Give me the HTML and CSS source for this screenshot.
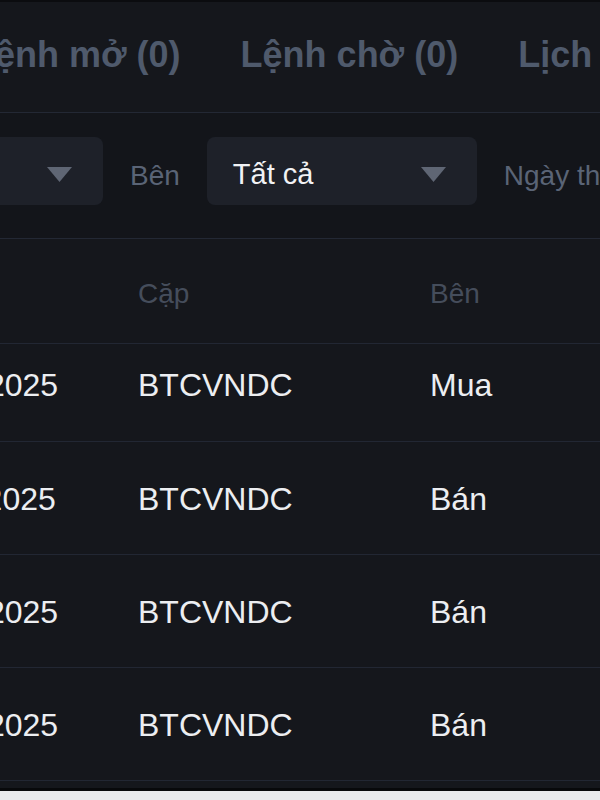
FILE: index.html
```html
<!DOCTYPE html>
<html lang="vi">
<head>
<meta charset="utf-8">
<title>Lịch sử lệnh</title>
<link rel="stylesheet" href="styles.css">
</head>
<body>
<div class="app">
  <nav class="tabs">
    <span class="tab">Lệnh mở (0)</span>
    <span class="tab">Lệnh chờ (0)</span>
    <span class="tab">Lịch sử lệnh</span>
  </nav>
  <div class="filters">
    <div class="select select-pair">
      <span class="select-value">Tất cả</span>
      <svg class="caret" width="25" height="15" viewBox="0 0 25 15"><path d="M0 0H25L12.5 15Z"/></svg>
    </div>
    <span class="filter-label">Bên</span>
    <div class="select select-side">
      <span class="select-value">Tất cả</span>
      <svg class="caret" width="25" height="15" viewBox="0 0 25 15"><path d="M0 0H25L12.5 15Z"/></svg>
    </div>
    <span class="filter-label">Ngày thực hiện</span>
  </div>
  <div class="table">
    <div class="row head">
      <span class="cell">Ngày</span>
      <span class="cell">Cặp</span>
      <span class="cell">Bên</span>
    </div>
    <div class="row first">
      <span class="cell">12/03/2025</span>
      <span class="cell">BTCVNDC</span>
      <span class="cell">Mua</span>
    </div>
    <div class="row">
      <span class="cell">11/03/2025</span>
      <span class="cell">BTCVNDC</span>
      <span class="cell">Bán</span>
    </div>
    <div class="row">
      <span class="cell">10/03/2025</span>
      <span class="cell">BTCVNDC</span>
      <span class="cell">Bán</span>
    </div>
    <div class="row">
      <span class="cell">08/03/2025</span>
      <span class="cell">BTCVNDC</span>
      <span class="cell">Bán</span>
    </div>
  </div>
</div>
</body>
</html>
```
FILE: styles.css
```css
html, body {
  margin: 0;
  padding: 0;
  background: #e9eaec;
  overflow: hidden;
}
body {
  width: 600px;
  height: 800px;
  font-family: "Liberation Sans", Arial, sans-serif;
}
.app {
  box-sizing: border-box;
  height: 791px;
  background: #15171c;
  border-top: 2px solid #0b0c0f;
  border-bottom: 3px solid #08090b;
  overflow: hidden;
}
.tabs {
  height: 111px;
  display: flex;
  align-items: center;
  gap: 60px;
  margin-left: -27px;
  padding-bottom: 4px;
  box-sizing: border-box;
  border-bottom: 1px solid #232834;
  white-space: nowrap;
}
.tab {
  font-size: 36px;
  font-weight: 700;
  color: #4f5a6c;
}
.filters {
  display: flex;
  align-items: center;
  gap: 27px;
  padding: 24px 0 33px;
  margin-left: -97px;
  border-bottom: 1px solid #232834;
  white-space: nowrap;
  background: #13151a;
}
.select {
  box-sizing: border-box;
  height: 68px;
  border-radius: 8px;
  background: #1e2129;
  display: flex;
  align-items: center;
  justify-content: space-between;
  padding: 7px 31px 0 26px;
  flex-shrink: 0;
}
.select-pair { width: 200px; }
.select-pair .select-value { visibility: hidden; }
.select-side { width: 270px; }
.select-value {
  font-size: 29px;
  color: #f1f2f4;
}
.caret { fill: #5f6674; }
.filter-label {
  font-size: 28px;
  color: #5a6476;
  padding-top: 9px;
}
.table {
  margin-left: -102px;
}
.row {
  display: grid;
  grid-template-columns: 240px 292px 1fr;
  align-items: center;
  height: 113px;
  box-sizing: border-box;
  padding-top: 2px;
  border-bottom: 1px solid #222733;
  font-size: 32px;
  color: #eceef1;
  white-space: nowrap;
}
.row.first { height: 98px; padding-top: 0; padding-bottom: 14px; }
.row.head {
  height: 105px;
  padding-top: 6px;
  font-size: 28px;
  color: #454d5b;
}
.cell { overflow: visible; }
```
